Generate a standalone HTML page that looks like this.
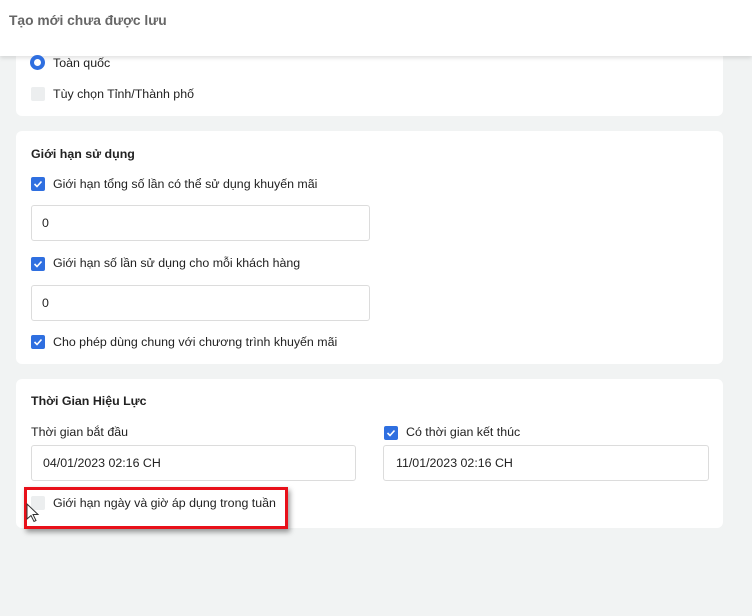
<!DOCTYPE html>
<html><head><meta charset="utf-8"><style>
*{box-sizing:border-box;margin:0;padding:0}
body{width:752px;height:616px;background:#f1f3f3;font-family:"Liberation Sans",sans-serif;font-size:12.4px;color:#222;position:relative;overflow:hidden}
.hdr{position:absolute;left:0;top:0;width:752px;height:56px;background:#fff;box-shadow:0 2px 4px rgba(0,0,0,.12);z-index:2}
.hdr span{position:absolute;left:9px;top:13px;font-size:13.8px;font-weight:bold;color:#666}
.card{position:absolute;left:16px;width:707px;background:#fff;border-radius:6px}
.a{position:absolute;white-space:nowrap}
.b{font-weight:bold}
.cb{position:absolute;width:14px;height:14px;border-radius:2px;background:#2f6fe0}
.cb svg{position:absolute;left:2px;top:2px}
.cbo{position:absolute;width:14px;height:14px;border-radius:2px;background:#eceeef}
.inp{position:absolute;border:1px solid #dcdcdc;border-radius:3px;height:36px;padding-left:10px;line-height:34px}
</style></head><body>
<div class="hdr"><span>Tạo mới chưa được lưu</span></div>
<div class="card" style="top:40px;height:76px"></div>
<div style="position:absolute;left:30px;top:55px;width:15px;height:15px;border-radius:50%;border:4px solid #2f6fe0;z-index:3;background:#fff"></div>
<div class="a" style="left:53px;top:56px;z-index:3">Toàn quốc</div>
<div class="cbo" style="left:31px;top:87px"></div>
<div class="a" style="left:53px;top:87px">Tùy chọn Tỉnh/Thành phố</div>

<div class="card" style="top:131px;height:233px"></div>
<div class="a b" style="left:31px;top:147px">Giới hạn sử dụng</div>
<div class="cb" style="left:31px;top:177px"><svg width="10" height="10" viewBox="0 0 10 10"><path d="M1.5 5l2.5 2.5 4.5-5" stroke="#fff" stroke-width="1.6" fill="none"/></svg></div>
<div class="a" style="left:53px;top:177px">Giới hạn tổng số lần có thể sử dụng khuyến mãi</div>
<div class="inp" style="left:31px;top:205px;width:339px">0</div>
<div class="cb" style="left:31px;top:257px"><svg width="10" height="10" viewBox="0 0 10 10"><path d="M1.5 5l2.5 2.5 4.5-5" stroke="#fff" stroke-width="1.6" fill="none"/></svg></div>
<div class="a" style="left:53px;top:256px">Giới hạn số lần sử dụng cho mỗi khách hàng</div>
<div class="inp" style="left:31px;top:285px;width:339px">0</div>
<div class="cb" style="left:31px;top:335px"><svg width="10" height="10" viewBox="0 0 10 10"><path d="M1.5 5l2.5 2.5 4.5-5" stroke="#fff" stroke-width="1.6" fill="none"/></svg></div>
<div class="a" style="left:53px;top:335px">Cho phép dùng chung với chương trình khuyến mãi</div>

<div class="card" style="top:379px;height:149px"></div>
<div class="a b" style="left:31px;top:394px">Thời Gian Hiệu Lực</div>
<div class="a" style="left:31px;top:425px">Thời gian bắt đầu</div>
<div class="inp" style="left:31px;top:445px;width:325px;padding-left:11px">04/01/2023 02:16 CH</div>
<div class="cb" style="left:384px;top:426px"><svg width="10" height="10" viewBox="0 0 10 10"><path d="M1.5 5l2.5 2.5 4.5-5" stroke="#fff" stroke-width="1.6" fill="none"/></svg></div>
<div class="a" style="left:406px;top:425px">Có thời gian kết thúc</div>
<div class="inp" style="left:383px;top:445px;width:326px;padding-left:12px">11/01/2023 02:16 CH</div>
<div style="position:absolute;left:24px;top:487px;width:264px;height:42px;border:3px solid #e8101a;box-shadow:2px 3px 5px rgba(0,0,0,.4)"></div>
<div class="cbo" style="left:31px;top:496px"></div>
<div class="a" style="left:53px;top:496px">Giới hạn ngày và giờ áp dụng trong tuần</div>
<svg style="position:absolute;left:26px;top:503px" width="14" height="20" viewBox="0 0 14 20"><path d="M1 1v15l4-3.5 3 6 2-1-3-6h5z" fill="#fff" stroke="#333" stroke-width="1"/></svg>
</body></html>
